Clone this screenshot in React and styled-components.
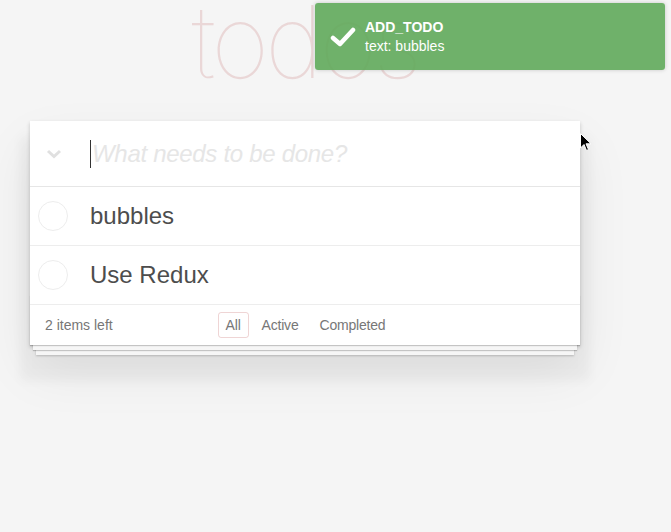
import React from 'react';
import styled, { createGlobalStyle } from 'styled-components';

const GlobalStyle = createGlobalStyle`
  html, body {
    margin: 0;
    padding: 0;
    background: #f5f5f5;
    font-family: "Liberation Sans", Arial, sans-serif;
    color: #4d4d4d;
    -webkit-font-smoothing: antialiased;
  }
`;

const Page = styled.div`
  position: relative;
  width: 671px;
  height: 532px;
  overflow: hidden;
`;

const App = styled.section`
  width: 550px;
  margin-left: 30px;
`;

const TitleBar = styled.div`
  height: 121px;
  overflow: hidden;
`;

const Title = styled.h1`
  margin: -8px 0 0;
  font-family: Inter, "Liberation Sans", sans-serif;
  font-size: 100px;
  font-weight: 100;
  line-height: 100px;
  letter-spacing: -4px;
  text-align: center;
  color: rgba(175, 47, 47, 0.15);
`;

const Panel = styled.div`
  background: #fff;
  box-shadow: 0 2px 4px 0 rgba(0, 0, 0, 0.2),
    0 25px 50px 0 rgba(0, 0, 0, 0.08),
    0 26px 10px 10px rgba(0, 0, 0, 0.035);
`;

const NewRow = styled.div`
  display: flex;
  align-items: center;
  height: 65px;
  border-bottom: 1px solid #e6e6e6;
`;

const ToggleAll = styled.div`
  width: 47px;
  display: flex;
  justify-content: center;
`;

const Placeholder = styled.div`
  display: flex;
  align-items: center;
  margin-left: 13px;
  font-size: 24px;
  font-style: italic;
  font-weight: 300;
  letter-spacing: -0.3px;
  color: #e6e6e6;
`;

const Caret = styled.span`
  display: inline-block;
  width: 1px;
  height: 28px;
  background: #333;
  margin-right: 1px;
`;

const Row = styled.div`
  display: flex;
  align-items: center;
  height: 58px;
  border-bottom: 1px solid #ededed;
`;

const Check = styled.span`
  width: 30px;
  height: 30px;
  margin-left: 8px;
  box-sizing: border-box;
  border: 1px solid #ededed;
  border-radius: 50%;
`;

const Label = styled.span`
  margin-left: 22px;
  font-size: 24px;
  color: #4d4d4d;
`;

const Footer = styled.footer`
  position: relative;
  display: grid;
  grid-template-columns: 1fr auto 1fr;
  align-items: center;
  height: 40px;
  padding: 0 15px;
  font-size: 14px;
  color: #777;

  &::before {
    content: '';
    position: absolute;
    left: 0;
    right: 0;
    bottom: 0;
    height: 50px;
    overflow: hidden;
    box-shadow: 0 1px 1px rgba(0, 0, 0, 0.2),
      0 8px 0 -3px #f6f6f6,
      0 9px 1px -3px rgba(0, 0, 0, 0.2),
      0 16px 0 -6px #f6f6f6,
      0 17px 2px -6px rgba(0, 0, 0, 0.2);
  }
`;

const Count = styled.span`
  position: relative;
`;

const Filters = styled.div`
  position: relative;
  display: flex;
  gap: 5px;
  margin-left: 1px;
`;

const Filter = styled.span`
  padding: 4px 7px;
  border: 1px solid ${p => (p.$selected ? 'rgba(175, 47, 47, 0.2)' : 'transparent')};
  border-radius: 3px;
  letter-spacing: -0.2px;
`;

const Toast = styled.div`
  position: absolute;
  top: 3px;
  left: 315px;
  width: 350px;
  height: 67px;
  box-sizing: border-box;
  display: flex;
  align-items: center;
  padding-left: 15px;
  border-radius: 3px;
  background: rgba(97, 170, 91, 0.9);
  box-shadow: 0 0 4px rgba(0, 0, 0, 0.18);
  color: #fff;
`;

const ToastText = styled.div`
  margin-left: 9px;
  font-size: 14px;
  line-height: 19px;
  padding-top: 1px;
  strong {
    display: block;
    font-weight: bold;
  }
`;

const Cursor = styled.svg`
  position: absolute;
  left: 580px;
  top: 133px;
`;

const todos = ['bubbles', 'Use Redux'];

export default function TodoApp() {
  return (
    <Page>
      <GlobalStyle />
      <App>
        <TitleBar>
          <Title>todos</Title>
        </TitleBar>
        <Panel>
          <NewRow>
            <ToggleAll>
              <svg width="16" height="10" viewBox="0 0 16 10">
                <polyline points="2,2 8,7.5 14,2" fill="none" stroke="#e0e0e0" strokeWidth="3" />
              </svg>
            </ToggleAll>
            <Placeholder>
              <Caret />
              What needs to be done?
            </Placeholder>
          </NewRow>
          {todos.map(t => (
            <Row key={t}>
              <Check />
              <Label>{t}</Label>
            </Row>
          ))}
          <Footer>
            <Count>2 items left</Count>
            <Filters>
              <Filter $selected>All</Filter>
              <Filter>Active</Filter>
              <Filter>Completed</Filter>
            </Filters>
          </Footer>
        </Panel>
      </App>
      <Toast>
        <svg width="26" height="22" viewBox="0 0 26 22">
          <polyline points="3,12 10,18 23,4" fill="none" stroke="#fff" strokeWidth="4.5" strokeLinecap="round" strokeLinejoin="round" />
        </svg>
        <ToastText>
          <strong>ADD_TODO</strong>
          text: bubbles
        </ToastText>
      </Toast>
      <Cursor width="12" height="19" viewBox="0 0 12 19">
        <path d="M0.5 0.5 L0.5 15 L4 11.5 L6.5 17.5 L8.5 16.5 L6 10.8 L11 10.8 Z" fill="#000" stroke="#fff" strokeWidth="1" />
      </Cursor>
    </Page>
  );
}
